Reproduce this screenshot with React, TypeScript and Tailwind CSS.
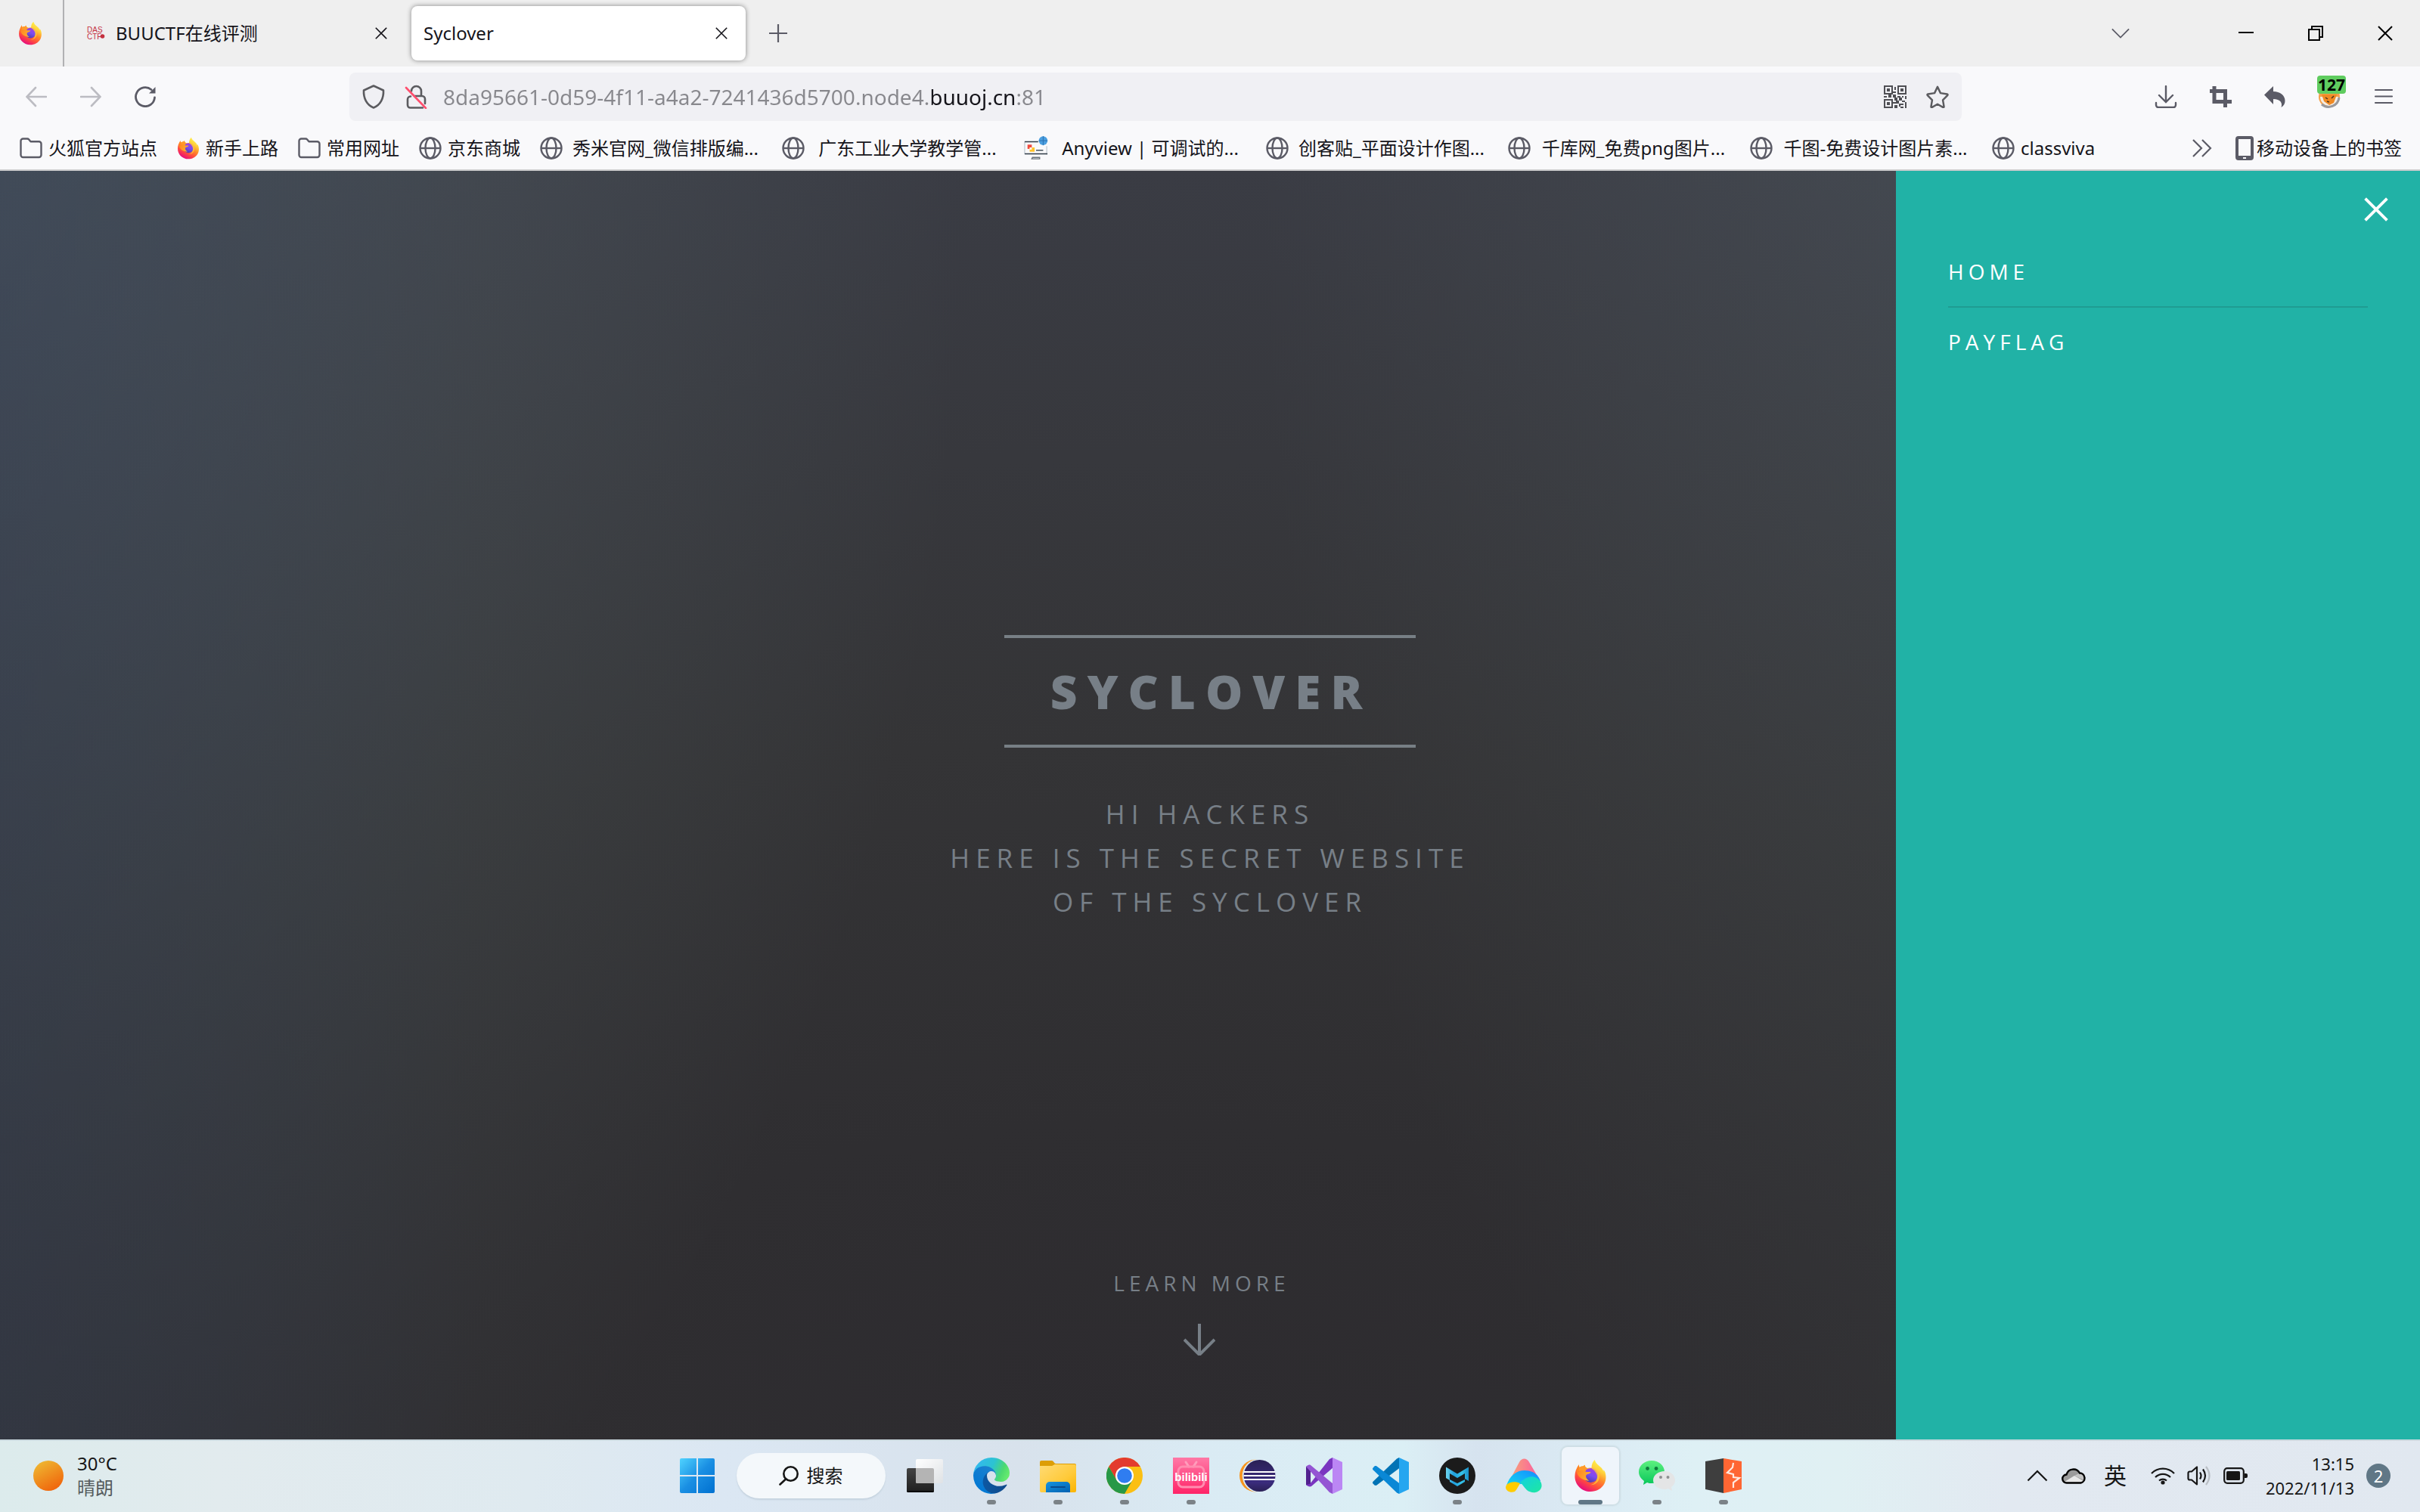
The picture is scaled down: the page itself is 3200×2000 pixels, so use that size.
import React from "react";

const UI = "font-['Noto_Sans','Noto_Sans_CJK_SC',sans-serif]";

function Firefox({ id, className }: { id: string; className: string }) {
  return (
    <svg viewBox="2 1 44 45" className={className} aria-hidden="true">
      <defs>
        <linearGradient id={id + "a"} x1="0.8" y1="0.05" x2="0.3" y2="0.95">
          <stop offset="0" stopColor="#fff44f" />
          <stop offset="0.25" stopColor="#ffd33c" />
          <stop offset="0.5" stopColor="#ff8a2a" />
          <stop offset="0.75" stopColor="#ff4a3f" />
          <stop offset="1" stopColor="#e8107a" />
        </linearGradient>
        <linearGradient id={id + "b"} x1="0.7" y1="0" x2="0.3" y2="1">
          <stop offset="0" stopColor="#a83de0" />
          <stop offset="0.5" stopColor="#7a4df0" />
          <stop offset="1" stopColor="#4a3aa8" />
        </linearGradient>
        <linearGradient id={id + "c"} x1="0" y1="0" x2="1" y2="0.6">
          <stop offset="0" stopColor="#ff7a1f" />
          <stop offset="1" stopColor="#ffb02e" />
        </linearGradient>
      </defs>
      <path
        fill={`url(#${id}a)`}
        d="M30 2C31 7 35 9 38.500 12.500C40 13.500 42 18 42 18C41.800 16.500 41.500 16 42 15.500C45.500 20 46 28 43 34C39.500 41 32 45 24 45C12.500 45 3 36 3 24.500C3 19 4.500 14 8.500 8.500C8.500 10.500 9 11.500 9.500 12C11.500 10.800 13 10.500 14 10.800C14.500 10.300 15.500 9.500 16.500 9C16.500 11 18 13 20.500 13.200C22 12.800 24 12.800 25.500 13C25.500 8 27.500 4 30 2Z"
      />
      <circle cx="24.500" cy="23" r="9.700" fill={`url(#${id}b)`} />
      <path fill="#ffce3a" d="M25.500 13C31 13.500 36 18 36 25C36 32 30 36.500 24 36C31 34.500 34 29 33 23C32 19 29 17 29.500 16.500C28 15.500 26 14.500 25.500 13Z" opacity="0.75" />
      <path fill={`url(#${id}c)`} d="M8.500 8.500C8 14 9 15 6.500 20C9 15.500 13 15.500 16.500 17.500C19.500 19 23.500 18 24.500 18.600C24 21 20 21 19 22C16.500 24 18.500 28 22.500 30.500C14 30 8 26 6 20C5 17 6 12 8.500 8.500Z" />
      <path fill="#ff9a2a" d="M9.500 12C11.500 10.800 13 10.500 14 10.800C14.500 10.300 15.500 9.500 16.500 9C16.500 11.500 18 13 20.500 13.600C17.500 14.500 18 16 17.500 18C14 16.500 11 16 8 17Z" />
    </svg>
  );
}

function Globe() {
  return (
    <svg viewBox="0 0 30 30" className="size-[30px] shrink-0" fill="none" stroke="#5b5b66" strokeWidth="2.400" aria-hidden="true">
      <circle cx="15" cy="15" r="13.500" />
      <ellipse cx="15" cy="15" rx="6.500" ry="13.500" />
      <path d="M1.500 15h27" />
    </svg>
  );
}

function Folder() {
  return (
    <svg viewBox="0 0 30 30" className="size-[30px] shrink-0" fill="none" stroke="#5b5b66" strokeWidth="2.400" strokeLinejoin="round" aria-hidden="true">
      <path d="M1.500 5.500a3 3 0 0 1 3-3h5.500a3 3 0 0 1 2.200 1l2.300 2.800h11a3 3 0 0 1 3 3v14.700a3 3 0 0 1-3 3h-21a3 3 0 0 1-3-3z" />
    </svg>
  );
}

function AnyviewIcon() {
  return (
    <svg viewBox="0 0 34 34" className="size-8 shrink-0" aria-hidden="true">
      <path d="M1 8v17M32 14v12" stroke="#b9c3cc" strokeWidth="1.200" fill="none" />
      <path d="M1 8h19M1 25h32" stroke="#2f3b46" strokeWidth="1.600" />
      <rect x="5" y="12" width="6" height="6" fill="#f04a3e" />
      <rect x="8" y="16" width="7" height="6" fill="#ffc32b" />
      <path d="M8 16h3v3H8z" fill="#fff" />
      <path d="M17 20h10" stroke="#44505a" strokeWidth="1.600" />
      <path d="M12 30h10v2H11z" fill="none" stroke="#6b747c" strokeWidth="1.500" />
      <circle cx="27" cy="6.500" r="6.200" fill="#4b9fe0" />
      <path d="M21 6.500h12M27 0v13" stroke="#2b6fae" strokeWidth="1" />
    </svg>
  );
}

const bookmarks: { label: string; icon: "folder" | "firefox" | "globe" | "anyview"; wide?: boolean }[] = [
  { label: "火狐官方站点", icon: "folder" },
  { label: "新手上路", icon: "firefox" },
  { label: "常用网址", icon: "folder" },
  { label: "京东商城", icon: "globe" },
  { label: "秀米官网_微信排版编...", icon: "globe", wide: true },
  { label: "广东工业大学教学管...", icon: "globe", wide: true },
  { label: "Anyview | 可调试的...", icon: "anyview", wide: true },
  { label: "创客贴_平面设计作图...", icon: "globe", wide: true },
  { label: "千库网_免费png图片...", icon: "globe", wide: true },
  { label: "千图-免费设计图片素...", icon: "globe", wide: true },
  { label: "classviva", icon: "globe" },
];

function CloseX({ size, color, width }: { size: string; color: string; width: number }) {
  return (
    <svg viewBox="0 0 20 20" className={size} stroke={color} strokeWidth={width} fill="none" aria-hidden="true">
      <path d="M1 1l18 18M19 1L1 19" />
    </svg>
  );
}

function TabStrip() {
  return (
    <div className="flex h-[88px] items-center bg-[#efefef]">
      <button aria-label="Firefox View" className="grid h-full w-[85px] place-items-center border-r-2 border-[#b1b1b3] pr-1">
        <Firefox id="t" className="size-8" />
      </button>
      <div className="flex h-[72px] w-[459px] items-center pr-8 pl-[30px]">
        <svg viewBox="0 0 24 18" className="mr-[14px] h-[18px] w-6 shrink-0" aria-hidden="true">
          <text x="0" y="8" fontSize="10" fill="#c4303f" fontFamily="Liberation Sans">DAS</text>
          <text x="0" y="17" fontSize="10" fill="#c4303f" fontFamily="Liberation Sans">CTF</text>
          <circle cx="20.500" cy="13" r="2.800" fill="#c4303f" />
        </svg>
        <span className="flex-1 text-2xl whitespace-nowrap text-[#15141a]">BUUCTF在线评测</span>
        <button aria-label="关闭标签页"><CloseX size="size-4" color="#15141a" width={2} /></button>
      </div>
      <div className="flex h-[72px] w-[442px] items-center rounded-lg bg-white pr-6 pl-4 shadow-[0_0_6px_rgba(0,0,0,0.45)]">
        <span className="flex-1 text-2xl text-[#15141a]">Syclover</span>
        <button aria-label="关闭标签页"><CloseX size="size-4" color="#15141a" width={2} /></button>
      </div>
      <button aria-label="新建标签页" className="ml-[31px]">
        <svg viewBox="0 0 24 24" className="size-6" stroke="#5b5b66" strokeWidth="2.200" aria-hidden="true"><path d="M12 0v24M0 12h24" /></svg>
      </button>
      <div className="ml-auto flex items-center pr-9">
        <button aria-label="列出所有标签页" className="mr-[144px]">
          <svg viewBox="0 0 26 14" className="h-[14px] w-6" fill="none" stroke="#5b5b66" strokeWidth="2" aria-hidden="true"><path d="M1 1l12 12L25 1" /></svg>
        </button>
        <button aria-label="最小化" className="mr-[72px]">
          <svg viewBox="0 0 20 20" className="size-5" stroke="#000" strokeWidth="2" aria-hidden="true"><path d="M0 9h20" /></svg>
        </button>
        <button aria-label="还原" className="mr-[72px]">
          <svg viewBox="0 0 20 20" className="size-5" fill="none" stroke="#000" strokeWidth="2" aria-hidden="true"><path d="M1 5h14v14H1zM5 5V1h14v14h-4" /></svg>
        </button>
        <button aria-label="关闭"><CloseX size="size-5" color="#000" width={2} /></button>
      </div>
    </div>
  );
}

function QrIcon() {
  return (
    <svg viewBox="0 0 15 15" className="size-[30px]" fill="#4f4f54" aria-hidden="true" shapeRendering="crispEdges">
      <path fillRule="evenodd" d="M0 0h6v6H0zM1 1v4h4V1zM9 0h6v6H9zM10 1v4h4V1zM0 9h6v6H0zM1 10v4h4v-4z" />
      <path d="M2 2h2v2H2zM11 2h2v2h-2zM2 11h2v2H2zM7 1h1v2H7zM6 4h2v1H6zM0 7h2v1H0zM3 6h2v2H3zM6 6h2v2H6zM9 7h2v1H9zM12 7h1v1h-1zM14 7h1v2h-1zM7 8h2v2H7zM10 8h2v2h-2zM12 10h2v1h-2zM6 11h2v1H6zM8 10h2v2H8zM11 12h2v1h-2zM7 13h2v2H7zM10 12h1v2h-1zM14 11h1v4h-1zM11 14h2v1h-2z" />
    </svg>
  );
}

function NavBar() {
  return (
    <div className="flex h-20 items-center bg-[#f9f9fb] text-[#5b5b66]">
      <div className="flex w-[462px] shrink-0 items-center gap-11 pl-[34px]">
        <button aria-label="后退" disabled>
          <svg viewBox="0 0 28 28" className="size-7" fill="none" stroke="#bcbcc2" strokeWidth="2.600" strokeLinecap="round" aria-hidden="true"><path d="M27 14H2M13 2L1.500 14 13 26" /></svg>
        </button>
        <button aria-label="前进" disabled>
          <svg viewBox="0 0 28 28" className="size-7" fill="none" stroke="#bcbcc2" strokeWidth="2.600" strokeLinecap="round" aria-hidden="true"><path d="M1 14h25M15 2l11.500 12L15 26" /></svg>
        </button>
        <button aria-label="重新加载">
          <svg viewBox="0 0 28 28" className="size-7" fill="none" stroke="#5b5b66" strokeWidth="2.800" strokeLinecap="round" aria-hidden="true">
            <path d="M26.500 15A12.500 12.500 0 1 1 22 4.500" />
            <path d="M27.500 1v8.500H19z" fill="#5b5b66" stroke="none" />
          </svg>
        </button>
      </div>
      <div className="flex h-16 flex-1 items-center rounded-lg bg-[#f0f0f4] px-[17px]">
        <svg viewBox="0 0 30 32" className="h-8 w-[30px] shrink-0" fill="none" stroke="#5b5b5f" strokeWidth="2.600" strokeLinejoin="round" aria-hidden="true">
          <path d="M15 1.500L28 7.500C28.500 18 24 27 15 30.500C6 27 1.500 18 2 7.500Z" />
        </svg>
        <svg viewBox="0 0 30 32" className="ml-[26px] h-8 w-[30px] shrink-0" fill="none" stroke="#5b5b5f" strokeWidth="2.600" strokeLinecap="round" aria-hidden="true">
          <path d="M9 8.500a6.500 6.500 0 0 1 13 0V15M8 15.500a4 4 0 0 0-4 4V27a3.500 3.500 0 0 0 3.500 3.500H24M13 15h10a4 4 0 0 1 4 4v6" />
          <path d="M2 4l26 27" stroke="#ff4f6e" />
        </svg>
        <input
          aria-label="地址栏"
          defaultValue="8da95661-0d59-4f11-a4a2-7241436d5700.node4.buuoj.cn:81"
          className="ml-[21px] min-w-0 flex-1 bg-[linear-gradient(90deg,#88888d_646px,#15141a_646px,#15141a_758px,#88888d_758px)] bg-clip-text text-[28px] text-transparent outline-none"
        />
        <button aria-label="二维码"><QrIcon /></button>
        <button aria-label="收藏" className="ml-[26px]">
          <svg viewBox="0 0 32 32" className="size-[30px]" fill="none" stroke="#5b5b5f" strokeWidth="2.600" strokeLinejoin="round" aria-hidden="true">
            <path d="M16 2l4.200 8.800 9.300 1.400c1 .2 1.300 1 .6 1.700l-6.600 6.700 1.600 9.200c.1 1-.6 1.500-1.500 1L16 26.400l-7.600 4.400c-.9.500-1.600 0-1.500-1l1.600-9.200-6.600-6.700c-.7-.7-.4-1.500.6-1.700l9.300-1.400z" />
          </svg>
        </button>
      </div>
      <div className="flex w-[606px] shrink-0 items-center justify-end gap-[42px] pr-[33px]">
        <button aria-label="下载">
          <svg viewBox="0 0 30 30" className="size-[30px]" fill="none" stroke="#5b5b66" strokeWidth="2.400" strokeLinecap="round" aria-hidden="true"><path d="M15 1v20M6 13l9 9 9-9M2 23v3a3 3 0 0 0 3 3h20a3 3 0 0 0 3-3v-3" /></svg>
        </button>
        <button aria-label="截图">
          <svg viewBox="0 0 30 30" className="size-[30px]" fill="none" stroke="#5b5b66" strokeWidth="5" aria-hidden="true"><path d="M7 1v20.500h23M1 7.500h20.500V29" /></svg>
        </button>
        <button aria-label="撤销">
          <svg viewBox="0 0 30 30" className="size-[30px]" fill="#5b5b66" aria-hidden="true"><path d="M13 1v7c9 0 15.500 5 15.500 12.500 0 3.500-1.500 6.500-5 8.500 2-6-1-11-10.500-11v7L1 12.500z" /></svg>
        </button>
        <button aria-label="扩展" className="relative">
          <svg viewBox="0 0 30 30" className="size-[30px]" aria-hidden="true">
            <circle cx="15" cy="15" r="14" fill="#f4a04a" />
            <path d="M3 15a12 12 0 0 0 24 0z" fill="#f3ece4" />
            <path d="M5 25a14 14 0 0 0 23-9" stroke="#9a9a9e" strokeWidth="3" fill="none" />
            <path d="M5 12l3 9 7 5 6-3 4-11z" fill="#f08a24" />
            <path d="M10 16l3 2M21 14l-3 3M12 21l3 1" stroke="#4a3420" strokeWidth="1.500" />
          </svg>
          <span className="absolute -top-[13px] -left-[1px] rounded-sm bg-[#5fcc5f] px-px text-[21px] leading-[24px] font-bold text-black">127</span>
        </button>
        <button aria-label="菜单">
          <svg viewBox="0 0 30 30" className="size-[30px]" stroke="#5b5b66" strokeWidth="2.200" strokeLinecap="round" aria-hidden="true"><path d="M4 6h22M4 14.500h22M4 23h22" /></svg>
        </button>
      </div>
    </div>
  );
}

function BookmarkBar() {
  return (
    <nav aria-label="书签" className="flex h-[58px] items-center border-b-2 border-[#cccccd] bg-[#f9f9fb] pr-6 pl-[26px] text-2xl text-[#15141a]">
      <div className="flex flex-1 items-center gap-[26px]">
        {bookmarks.map((b) => (
          <a key={b.label} href="#" className={b.wide ? "flex w-[294px] items-center gap-2 whitespace-nowrap" : "flex items-center gap-2 whitespace-nowrap"}>
            {b.icon === "folder" && <Folder />}
            {b.icon === "firefox" && <Firefox id="b" className="size-[30px] shrink-0" />}
            {b.icon === "globe" && <Globe />}
            {b.icon === "anyview" && <AnyviewIcon />}
            <span className={b.wide ? "flex-1 text-center" : ""}>{b.label}</span>
          </a>
        ))}
      </div>
      <button aria-label="更多书签" className="mr-[30px]">
        <svg viewBox="0 0 28 24" className="h-6 w-7" fill="none" stroke="#5b5b66" strokeWidth="2.200" aria-hidden="true"><path d="M2 1l11 11L2 23M14 1l11 11-11 11" /></svg>
      </button>
      <a href="#" className="flex items-center gap-1 whitespace-nowrap">
        <svg viewBox="0 0 24 32" className="h-8 w-6" aria-hidden="true">
          <path fillRule="evenodd" fill="#5b5b66" d="M4 0h16a4 4 0 0 1 4 4v24a4 4 0 0 1-4 4H4a4 4 0 0 1-4-4V4a4 4 0 0 1 4-4zM4 4v22h16V4zM10 28v2h4v-2z" />
        </svg>
        移动设备上的书签
      </a>
    </nav>
  );
}

function Hero() {
  return (
    <main className="relative flex flex-1 flex-col items-center bg-[linear-gradient(90deg,rgba(42,54,84,0.3),rgba(42,54,84,0)_20%),radial-gradient(ellipse_40%_125%_at_0%_0%,rgba(104,126,132,0.32),rgba(104,126,132,0)),radial-gradient(ellipse_28%_115%_at_80%_0%,rgba(104,120,126,0.2),rgba(104,120,126,0)),radial-gradient(ellipse_110%_100%_at_47%_100%,#2d2b2f_0%,#2f2e31_25%,#343436_55%,#3a3c44_100%,#3d4148_115%)] pt-[614px] font-['Open_Sans'] text-[#777f87] uppercase">
      <h1 className="border-y-4 border-[#777f85] py-6 pr-[58px] pl-[61px] text-[62px] leading-[93px] font-extrabold tracking-[13px]">Syclover</h1>
      <p className="mt-[59px] text-center text-[35px] leading-[58px] tracking-[8px]">
        Hi Hackers<br />Here is the secret website<br />of the Syclover
      </p>
      <a href="#one" className="mt-auto mr-[22px] flex flex-col items-center pb-[111px] text-[28px] leading-[42px] tracking-[6px]">
        <span>Learn More</span>
        <svg viewBox="0 0 42 42" className="mt-[33px] mr-[6px] size-[42px]" fill="none" stroke="#777f87" strokeWidth="4" aria-hidden="true"><path d="M21 0v41M1 21l20 20 20-20" /></svg>
      </a>
      <aside className="absolute inset-y-0 right-0 w-[693px] bg-[#21b2a6] px-[69px] pt-[104px] text-[28px] text-white">
        <button aria-label="Close menu" className="absolute top-[35px] right-[42px]"><CloseX size="size-8" color="#fff" width={2.4} /></button>
        <ul className="leading-[58px] tracking-[6px]">
          <li className="border-b-2 border-[#1f9c92] pb-[17px]"><a href="#home">Home</a></li>
          <li className="pt-4"><a href="#pay">PayFlag</a></li>
        </ul>
      </aside>
    </main>
  );
}

function Slot({ label, run, active, children }: { label: string; run?: boolean; active?: boolean; children: React.ReactNode }) {
  return (
    <button aria-label={label} className="relative grid h-full w-[88px] place-items-center">
      <span className={active ? "grid size-[76px] place-items-center rounded-lg bg-[#eff5fb] shadow-[0_0_2px_2px_#cddde4]" : "grid size-[76px] place-items-center"}>{children}</span>
      {run && !active && <span className="absolute bottom-[10px] left-[38px] h-[6px] w-3 rounded-full bg-[#7b8287]" />}
      {active && <span className="absolute bottom-[10px] left-7 h-[6px] w-8 rounded-full bg-[#607786]" />}
    </button>
  );
}

const ico = "size-12";

function Taskbar() {
  return (
    <footer className="grid h-24 grid-cols-[1fr_auto_1fr] items-center bg-[linear-gradient(90deg,#dcebec_0%,#e2ebee_9%,#dfeaf0_22%,#dbe7f3_30%,#d8e2ec_42%,#daebf4_50%,#dbeff5_58%,#d6e3ef_61%,#dbebf4_66%,#def0f5_70%,#e0f0f3_76%,#e2e9f1_83%,#e1e8f0_100%)] text-[#161616] shadow-[inset_0_2px_0_#ccdae0]">
      <div className="flex items-center gap-[18px] pl-11">
        <svg viewBox="0 0 40 40" className="size-10" aria-hidden="true">
          <defs><linearGradient id="sun" x1="0.2" y1="0" x2="0.7" y2="0.9"><stop offset="0" stopColor="#efb932" /><stop offset="1" stopColor="#f06a0e" /></linearGradient></defs>
          <circle cx="20" cy="20" r="20" fill="url(#sun)" />
        </svg>
        <div className="text-2xl leading-8">
          <div>30°C</div>
          <div className="text-[#555c5e]">晴朗</div>
        </div>
      </div>
      <div className="flex h-24 items-center">
        <Slot label="开始">
          <svg viewBox="0 0 46 46" className="size-[46px]" aria-hidden="true">
            <defs><linearGradient id="win" gradientUnits="userSpaceOnUse" x1="0" y1="0" x2="46" y2="46"><stop offset="0" stopColor="#4fd3ff" /><stop offset="0.5" stopColor="#1a8fe3" /><stop offset="1" stopColor="#0070d0" /></linearGradient></defs>
            <path fill="url(#win)" d="M2 0h20v22H0V2a2 2 0 0 1 2-2zM24 0h20a2 2 0 0 1 2 2v20H24zM0 24h22v22H2a2 2 0 0 1-2-2zM24 24h22v20a2 2 0 0 1-2 2H24z" />
          </svg>
        </Slot>
        <button className="mx-[8px] flex h-[60px] w-[197px] items-center justify-center gap-[11px] rounded-full bg-[#f4f8fb] text-2xl shadow-[0_2px_2px_#c5d3df]">
          <svg viewBox="0 0 26 26" className="size-[26px]" fill="none" stroke="#161616" strokeWidth="2.600" strokeLinecap="round" aria-hidden="true"><circle cx="15.500" cy="10.500" r="9.200" /><path d="M9 17.500L1.500 24.500" /></svg>
          搜索
        </button>
        <Slot label="任务视图">
          <svg viewBox="0 0 48 48" className={ico} aria-hidden="true">
            <defs>
              <linearGradient id="tv" x1="0" y1="0" x2="0" y2="1"><stop offset="0" stopColor="#444" /><stop offset="1" stopColor="#1e1e1e" /></linearGradient>
              <linearGradient id="tw" x1="0" y1="0" x2="1" y2="1"><stop offset="0" stopColor="#fff" /><stop offset="1" stopColor="#dfe2e5" /></linearGradient>
            </defs>
            <rect x="0" y="14" width="36" height="32" rx="2" fill="url(#tv)" />
            <path d="M0 44h36v0a2 2 0 0 1-2 2H2a2 2 0 0 1-2-2z" fill="#050505" />
            <rect x="12" y="2" width="36" height="32" rx="2" fill="url(#tw)" />
            <path d="M12 14h22a2 2 0 0 1 2 2v18H14a2 2 0 0 1-2-2z" fill="#b4b4b4" />
          </svg>
        </Slot>
        <Slot label="Microsoft Edge" run>
          <svg viewBox="0 0 256 256" className={ico} aria-hidden="true">
            <defs>
              <linearGradient id="e1" x1="0" y1="0.5" x2="1" y2="0.5"><stop offset="0" stopColor="#0c59a4" /><stop offset="1" stopColor="#114a8b" /></linearGradient>
              <linearGradient id="e2" x1="0.7" y1="0.1" x2="0.2" y2="0.9"><stop offset="0" stopColor="#1b80cf" /><stop offset="1" stopColor="#0078d4" /></linearGradient>
              <linearGradient id="e3" x1="0" y1="0.3" x2="1" y2="0.6"><stop offset="0" stopColor="#35b8f1" /><stop offset="0.5" stopColor="#2cc3d2" /><stop offset="0.8" stopColor="#4cd970" /><stop offset="1" stopColor="#66eb6e" /></linearGradient>
            </defs>
            <path fill="url(#e1)" transform="translate(-4.630 -4.920)" d="M235.680 195.460a93.730 93.730 0 0 1-10.540 4.710 101.870 101.870 0 0 1-35.900 6.460c-47.320 0-88.540-32.550-88.540-74.320A31.480 31.480 0 0 1 117.130 105c-42.800 1.800-53.800 46.400-53.800 72.530 0 73.880 68.090 81.370 82.760 81.370 7.910 0 19.840-2.300 27-4.560l1.310-.44a128.340 128.340 0 0 0 66.600-52.800 4 4 0 0 0-5.320-5.640z" />
            <path fill="url(#e2)" transform="translate(-4.630 -4.920)" d="M110.340 246.340A79.200 79.200 0 0 1 87.600 225a80.720 80.720 0 0 1 29.530-120c3.120-1.470 8.450-4.130 15.540-4a32.350 32.350 0 0 1 25.690 13 31.880 31.880 0 0 1 6.360 18.660c0-.21 24.460-79.600-80-79.600-43.900 0-80 41.660-80 78.210a130.150 130.150 0 0 0 12.110 56 128 128 0 0 0 156.380 67.110 75.550 75.550 0 0 1-62.780-8z" />
            <path fill="url(#e3)" d="M152.330 148.860c-.81 1.050-3.300 2.500-3.300 5.660 0 2.610 1.700 5.120 4.720 7.230 14.380 10 41.490 8.680 41.560 8.680a59.560 59.560 0 0 0 30.270-8.350A61.380 61.380 0 0 0 256 109.170c.26-22.410-8-37.310-11.340-43.910C223.460 23.840 177.720 0 128 0A128 128 0 0 0 0 126.200c.48-36.540 36.800-66.050 80-66.050 3.500 0 23.460.34 42 10.070 16.340 8.580 24.900 18.940 30.850 29.210 6.180 10.670 7.280 24.150 7.280 29.520s-2.740 13.330-7.800 19.910z" />
          </svg>
        </Slot>
        <Slot label="文件资源管理器" run>
          <svg viewBox="0 0 48 48" className={ico} aria-hidden="true">
            <defs>
              <linearGradient id="fo" x1="0" y1="0" x2="1" y2="1"><stop offset="0" stopColor="#ffdb75" /><stop offset="0.6" stopColor="#ffca3a" /><stop offset="1" stopColor="#fbb400" /></linearGradient>
              <linearGradient id="fp" x1="0" y1="0" x2="1" y2="1"><stop offset="0" stopColor="#1794e0" /><stop offset="1" stopColor="#0060b0" /></linearGradient>
            </defs>
            <path fill="#dd9e06" d="M0 6a2 2 0 0 1 2-2h14c2 0 3 4 5 4h25a2 2 0 0 1 2 2v8H0z" />
            <path fill="url(#fo)" d="M0 11h15c3 0 3-2 6-2h25a2 2 0 0 1 2 2v33a2 2 0 0 1-2 2H2a2 2 0 0 1-2-2z" />
            <path fill="url(#fp)" d="M8 46v-9a5 5 0 0 1 5-5h22a5 5 0 0 1 5 5v9z" />
            <path d="M15 39h18" stroke="#0a4a8c" strokeWidth="2" strokeLinecap="round" />
          </svg>
        </Slot>
        <Slot label="Google Chrome" run>
          <svg viewBox="0 0 48 48" className={ico} aria-hidden="true">
            <circle cx="24" cy="24" r="24" fill="#fbbf12" />
            <path fill="#e33b2e" d="M3.200 12A24 24 0 0 1 44.800 12H24L13.600 30z" />
            <path fill="#279847" d="M3.200 12A24 24 0 0 0 24 48L34.400 30H13.600z" />
            <circle cx="24" cy="24" r="12" fill="#fff" />
            <circle cx="24" cy="24" r="9.800" fill="#2f7df0" />
          </svg>
        </Slot>
        <Slot label="哔哩哔哩" run>
          <svg viewBox="0 0 48 48" className={ico} aria-hidden="true">
            <defs><linearGradient id="bl" x1="0" y1="0" x2="0" y2="1"><stop offset="0" stopColor="#ff79a6" /><stop offset="1" stopColor="#ff2468" /></linearGradient></defs>
            <rect width="48" height="48" fill="url(#bl)" />
            <path d="M17 6l4 6M31 6l-4 6" stroke="#ff9dbb" strokeWidth="3" strokeLinecap="round" />
            <rect x="7" y="12" width="34" height="27" rx="6" fill="none" stroke="#ff8db0" strokeWidth="3" />
            <text x="24" y="31" textAnchor="middle" fontSize="15" fontWeight="700" fill="#fff" fontFamily="Liberation Sans">bilibili</text>
          </svg>
        </Slot>
        <Slot label="Eclipse">
          <svg viewBox="0 0 48 48" className={ico} aria-hidden="true">
            <defs><linearGradient id="ec" x1="0" y1="0" x2="0" y2="1"><stop offset="0" stopColor="#2a2055" /><stop offset="0.7" stopColor="#3b2c7e" /><stop offset="1" stopColor="#2a2055" /></linearGradient></defs>
            <circle cx="21.500" cy="24" r="21.500" fill="#f7941e" />
            <circle cx="26" cy="24" r="22.300" fill="#dcecf5" />
            <circle cx="26.500" cy="24" r="21" fill="url(#ec)" />
            <path d="M6 19h41M5.500 24h42M6 29h41" stroke="#fff" strokeWidth="2.200" />
          </svg>
        </Slot>
        <Slot label="Visual Studio">
          <svg viewBox="0 0 48 48" className={ico} aria-hidden="true">
            <path fill="#52218f" d="M0 12l6-2v28l-6-2z" />
            <path fill="#7a36c0" d="M35 0l1 13L7 38c-2 1-5 0-7-2l5-1L31 2z" />
            <path fill="#9455d3" d="M6 10L36 35l-1 13-4-2L0 12c2-2 4-3 6-2z" />
            <path fill="#bb86f4" d="M35 0l13 6v36l-13 6z" />
          </svg>
        </Slot>
        <Slot label="Visual Studio Code">
          <svg viewBox="0 0 48 48" className={ico} aria-hidden="true">
            <path fill="#0273b5" d="M35 0l1 13.500L5.500 36.500c-1 .7-2 .5-3 0L.6 34.600c-.8-.8-.8-2 0-2.800L32 1.500z" />
            <path fill="#0a88d6" d="M35 48l1-13.500L5.500 11.500c-1-.7-2-.5-3 0L.6 13.400c-.8.8-.8 2 0 2.800L32 46.500z" />
            <path fill="#25a6f0" d="M35 0l13 6v36l-13 6z" />
          </svg>
        </Slot>
        <Slot label="MarkText" run>
          <svg viewBox="0 0 48 48" className={ico} aria-hidden="true">
            <defs><linearGradient id="mk" x1="0" y1="0" x2="1" y2="0"><stop offset="0" stopColor="#6fd6f0" /><stop offset="0.35" stopColor="#1f9fdc" /><stop offset="0.7" stopColor="#36c3e8" /><stop offset="1" stopColor="#1a8fc8" /></linearGradient></defs>
            <circle cx="24" cy="24" r="24" fill="#1b1b1b" />
            <path fill="url(#mk)" d="M9 12.500l15 9 15-9V31l-5-3v-7l-10 6-10-6v9l-5-3zM14 29l10 5 10-5v3l-10 6-10-6z" />
          </svg>
        </Slot>
        <Slot label="Apifox">
          <svg viewBox="0 0 48 48" className={ico} aria-hidden="true">
            <defs>
              <linearGradient id="a1" x1="0" y1="0.5" x2="1" y2="0.5"><stop offset="0" stopColor="#f7a07a" /><stop offset="1" stopColor="#fb5da0" /></linearGradient>
              <linearGradient id="a2" x1="0" y1="1" x2="1" y2="0.3"><stop offset="0" stopColor="#12d8f0" /><stop offset="1" stopColor="#1592ff" /></linearGradient>
              <linearGradient id="a3" x1="0" y1="0" x2="1" y2="1"><stop offset="0" stopColor="#12d0e0" /><stop offset="1" stopColor="#1ee8a0" /></linearGradient>
            </defs>
            <path fill="url(#a1)" d="M8 25L18 6C21 0 28 0 31 6l13 22-20-6z" />
            <path fill="url(#a2)" d="M1 37C5 24 14 17 25 17c10 0 18 5 21 14L20 35z" />
            <path fill="url(#a3)" d="M19 33C26 26 34 23 41 27c7 4 9 12 3 17-4 3-11 3-16-1-4-4-5-7-9-10z" />
            <path fill="#ffcc00" d="M1 36c4-4 12-5 18-2-3 5-4 8-7 11-5 2-12 0-12-6z" />
          </svg>
        </Slot>
        <Slot label="Firefox" active><Firefox id="k" className="size-11" /></Slot>
        <Slot label="微信" run>
          <svg viewBox="0 0 48 48" className={ico} aria-hidden="true">
            <defs><linearGradient id="wc" x1="0" y1="0" x2="0" y2="1"><stop offset="0" stopColor="#5df07f" /><stop offset="1" stopColor="#08c75a" /></linearGradient></defs>
            <path fill="url(#wc)" d="M17 4c10 0 17 7 17 15S27 34 17 34c-2 0-4 0-6-1l-5 3 1-5C3 28 0 24 0 19 0 11 7 4 17 4z" />
            <path fill="#e4e5e6" d="M34 18c8 0 14 5 14 12 0 4-2 7-5 9l1 5-5-3c-2 .7-3 1-5 1-8 0-15-5-15-12s7-12 15-12z" />
            <circle cx="11.500" cy="14.500" r="2.400" fill="#0e7a3c" /><circle cx="23" cy="14.500" r="2.400" fill="#0e7a3c" />
            <circle cx="29" cy="26" r="2" fill="#8d8f91" /><circle cx="38.500" cy="26" r="2" fill="#8d8f91" />
          </svg>
        </Slot>
        <Slot label="Burp Suite" run>
          <svg viewBox="0 0 48 48" className={ico} aria-hidden="true">
            <path fill="#3e3e3e" d="M0 5l24-4v46L0 42z" />
            <path fill="#ff6633" d="M24 1l24 4v37l-24 5z" />
            <path d="M37 7l-1 6-7 7 8 2v4l8 1-8 6v7" fill="none" stroke="#ffe9e0" strokeWidth="2.200" />
          </svg>
        </Slot>
      </div>
      <div className="flex items-center justify-end pr-[39px]">
        <button aria-label="显示隐藏的图标" className="mr-[18px]">
          <svg viewBox="0 0 28 16" className="h-4 w-7" fill="none" stroke="#161616" strokeWidth="2.200" aria-hidden="true"><path d="M1.500 14.500L14 2l12.500 12.500" /></svg>
        </button>
        <svg viewBox="0 0 32 24" className="mr-6 h-6 w-8" aria-hidden="true">
          <path d="M7 21.500a5.500 5.500 0 0 1-.5-11A9.500 9.500 0 0 1 24 8.500a6.600 6.600 0 0 1 1.500 13z" fill="#9b9b9b" />
          <path d="M4 20l13-8 12 7-2 2.500H7z" fill="#e8e8e8" />
          <path d="M17 12l7-3.500c5 0 7 4 6 9.500z" fill="#c4c4c4" />
          <path d="M7 21.500a5.500 5.500 0 0 1-.5-11A9.500 9.500 0 0 1 24 8.500a6.600 6.600 0 0 1 1.500 13z" fill="none" stroke="#000" strokeWidth="2.400" />
        </svg>
        <button aria-label="输入法" className="mr-8 text-[30px] leading-9">英</button>
        <svg viewBox="0 0 32 26" className="mr-4 h-[26px] w-8" fill="none" stroke="#161616" strokeWidth="2.200" aria-hidden="true">
          <path d="M1 10a21 21 0 0 1 30 0M6 15a14 14 0 0 1 20 0M11 19.500a7.500 7.500 0 0 1 10 0" />
          <circle cx="16" cy="22" r="2.600" fill="#161616" stroke="none" />
        </svg>
        <svg viewBox="0 0 32 28" className="mr-4 h-7 w-8" fill="none" stroke="#161616" strokeWidth="2.200" strokeLinejoin="round" aria-hidden="true">
          <path d="M1.500 10.500a2 2 0 0 1 2-2H6l7-6v23l-7-6H3.500a2 2 0 0 1-2-2zM17 9.500q3 4.500 0 9M21 5.500q6 8.500 0 17" />
          <path d="M25 2q9 12 0 24" stroke="#b9bec4" />
        </svg>
        <svg viewBox="0 0 32 22" className="mr-6 h-[22px] w-8" aria-hidden="true">
          <rect x="1.200" y="1.200" width="25.600" height="19.600" rx="4" fill="none" stroke="#161616" strokeWidth="2.200" />
          <rect x="4" y="5" width="18" height="12" rx="1.500" fill="#161616" />
          <path d="M28 8h2a2 2 0 0 1 2 2v2a2 2 0 0 1-2 2h-2z" fill="#161616" />
        </svg>
        <div className="mr-4 text-right text-[22px] leading-8">
          <div>13:15</div>
          <div>2022/11/13</div>
        </div>
        <span className="grid size-8 place-items-center rounded-full bg-[#607786] text-[22px] leading-none text-white">2</span>
      </div>
    </footer>
  );
}

export default function App() {
  return (
    <div className={`flex min-h-screen flex-col ${UI}`}>
      <header>
        <TabStrip />
        <NavBar />
        <BookmarkBar />
      </header>
      <Hero />
      <Taskbar />
    </div>
  );
}
